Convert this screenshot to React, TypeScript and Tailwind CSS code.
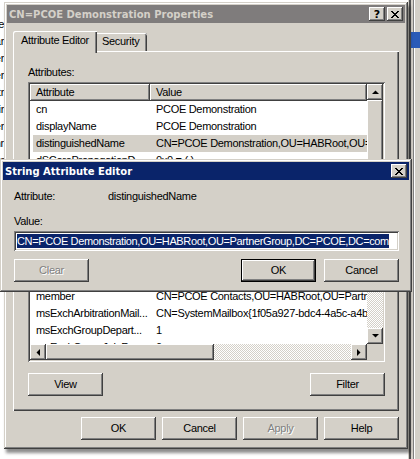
import type { ReactNode } from "react";

const RAISED =
  "shadow-[inset_-1px_-1px_#404040,inset_1px_1px_#ffffff,inset_-2px_-2px_#808080,inset_2px_2px_#d4d0c8]";
const SUNKEN =
  "shadow-[inset_1px_1px_#808080,inset_-1px_-1px_#ffffff,inset_2px_2px_#404040,inset_-2px_-2px_#d4d0c8]";
const DITHER =
  "[background-image:repeating-conic-gradient(#ffffff_0_25%,#d4d0c8_0_50%)] [background-size:2px_2px]";
const CAPTION = "[font-family:'DejaVu_Sans',sans-serif] text-[10px] font-bold tracking-normal";

// rows 5-11 sit under the string editor dialog, so they are left blank
const rows: [string, string][] = [
  ["cn", "PCOE Demonstration"],
  ["displayName", "PCOE Demonstration"],
  ["distinguishedName", "CN=PCOE Demonstration,OU=HABRoot,OU=PartnerGroup,DC=PCOE,DC=com"],
  ["dSCorePropagationD...", "0x0 = (  )"],
  ["", ""],
  ["", ""],
  ["", ""],
  ["", ""],
  ["", ""],
  ["", ""],
  ["", ""],
  ["member", "CN=PCOE Contacts,OU=HABRoot,OU=PartnerGroup,DC=PCOE,DC=com"],
  ["msExchArbitrationMail...", "CN=SystemMailbox{1f05a927-bdc4-4a5c-a4b2-9c3e1d7f0a11}"],
  ["msExchGroupDepart...", "1"],
  ["msExchGroupJoinRe...", "0"],
];

const behind = ["Name", "Bar", "Folder", "User", "Contr", "Admir", "Guer", "Ownr", "Usr"];

export default function App() {
  return (
    <div className="relative h-[459px] w-[420px] overflow-hidden bg-white text-[11px] leading-[13px] tracking-[-0.3px] text-black [font-family:'Liberation_Sans',Arial,sans-serif]">
      {/* windows behind */}
      <div className="absolute left-0 top-[16px] flex w-[4px] flex-col overflow-hidden">
        {behind.map((t, i) => (
          <div key={i} className="flex h-[17px] items-center justify-end whitespace-nowrap">
            {t}
          </div>
        ))}
      </div>
      <div className="absolute left-[408px] top-0 flex h-full w-[12px] bg-[#d4d0c8]">
        <div className="w-px bg-[#d4d0c8]" />
        <div className="w-[2px] bg-[#505050]" />
        <div className="w-[2px] bg-[#d4d0c8]" />
        <div className="w-px bg-[#808080]" />
        <div className="w-px bg-white" />
        <div className="relative flex-1">
          <div className="absolute left-[-4px] right-0 top-[32px] h-[16px] bg-[#2a5bb8]" />
        </div>
      </div>

      <PropertiesWindow />
      <StringEditor />
    </div>
  );
}

function PropertiesWindow() {
  return (
    <div className="absolute left-[4px] top-[2px] z-10 flex h-[447px] w-[404px] flex-col bg-[#d4d0c8] p-[3px] shadow-[inset_-1px_-1px_#404040,inset_1px_1px_#d4d0c8,inset_-2px_-2px_#808080,inset_2px_2px_#ffffff,2px_4px_3px_rgba(0,0,0,0.45)]">
      <div className="flex h-[18px] items-center bg-[#7f7c7c] px-[2px]">
        <span className={`${CAPTION} text-[#d4d0c8]`}>CN=PCOE Demonstration Properties</span>
        <div className="ml-auto flex gap-[2px]">
          <CaptionButton>
            <span className={`${CAPTION} text-[11px] leading-none`}>?</span>
          </CaptionButton>
          <CaptionButton>
            <CloseGlyph />
          </CaptionButton>
        </div>
      </div>

      <div className="flex flex-1 flex-col px-[6px] pt-[8px]">
        <div className="flex h-[20px] items-end">
          <div className="relative z-10 mb-[-2px] h-[22px] w-[84px] rounded-tl-[2px] bg-[#d4d0c8] pl-[8px] pt-[3px] shadow-[inset_1px_1px_#ffffff,inset_-1px_0_#404040,inset_-2px_0_#808080]">
            Attribute Editor
          </div>
          <div className="h-[18px] w-[50px] rounded-tr-[2px] bg-[#d4d0c8] pl-[5px] pt-[2px] shadow-[inset_0_1px_#ffffff,inset_-1px_0_#404040,inset_-2px_0_#808080]">
            Security
          </div>
        </div>

        <div className="h-[360px] bg-[#d4d0c8] pl-[15px] pt-[15px] shadow-[inset_1px_1px_#ffffff,inset_-1px_-1px_#404040,inset_-2px_-2px_#808080]">
          <div className="h-[13px]">Attributes:</div>
          <AttributeList />
          <div className="mt-[11px] flex w-[357px] justify-between">
            <Button label="View" />
            <Button label="Filter" />
          </div>
        </div>

        <div className="mt-[6px] flex justify-end gap-[6px]">
          <Button label="OK" />
          <Button label="Cancel" />
          <Button label="Apply" disabled />
          <Button label="Help" />
        </div>
      </div>
    </div>
  );
}

function AttributeList() {
  return (
    <div className={`mt-[3px] grid h-[280px] w-[357px] grid-cols-[337px_16px] grid-rows-[260px_16px] bg-white p-[2px] ${SUNKEN}`}>
      <div className="flex flex-col overflow-hidden">
        <div className="flex h-[17px] shrink-0">
          <div className={`flex w-[120px] items-center bg-[#d4d0c8] pl-[6px] ${RAISED}`}>Attribute</div>
          <div className={`flex flex-1 items-center bg-[#d4d0c8] pl-[6px] ${RAISED}`}>Value</div>
        </div>
        <div className="flex-1 overflow-hidden">
          {rows.map(([name, value], i) => (
            <div key={i} className="h-[17px] pl-[3px]">
              <div className={`flex h-full items-center ${name === "distinguishedName" ? "bg-[#d4d0c8]" : ""}`}>
                <div className="w-[117px] overflow-hidden whitespace-nowrap pl-[3px]">{name}</div>
                <div className="flex-1 overflow-hidden whitespace-nowrap pl-[6px]">{value}</div>
              </div>
            </div>
          ))}
        </div>
      </div>

      <div className="flex flex-col">
        <ScrollArrow dir="up" />
        <div className={`h-[120px] bg-[#d4d0c8] ${RAISED}`} />
        <div className={`flex-1 ${DITHER}`} />
        <ScrollArrow dir="down" />
      </div>

      <div className="flex">
        <ScrollArrow dir="left" />
        <div className={`w-[168px] bg-[#d4d0c8] ${RAISED}`} />
        <div className={`flex-1 ${DITHER}`} />
        <ScrollArrow dir="right" />
      </div>
      <div className="bg-[#d4d0c8]" />
    </div>
  );
}

function StringEditor() {
  return (
    <div className="absolute left-0 top-[159px] z-20 flex h-[133px] w-[412px] flex-col bg-[#d4d0c8] p-[3px] shadow-[inset_-1px_-1px_#404040,inset_1px_1px_#d4d0c8,inset_-2px_-2px_#808080,inset_2px_2px_#ffffff]">
      <div className="flex h-[18px] items-center bg-[#0a246a] pl-[2px] pr-[2px]">
        <span className={`${CAPTION} text-white`}>String Attribute Editor</span>
        <div className="ml-auto">
          <CaptionButton>
            <CloseGlyph />
          </CaptionButton>
        </div>
      </div>

      <div className="flex flex-col pl-[11px] pr-[10px]">
        <div className="mt-[10px] flex h-[13px]">
          <span className="w-[94px]">Attribute:</span>
          <span>distinguishedName</span>
        </div>
        <div className="mt-[12px] h-[13px]">Value:</div>
        <div className={`mt-[3px] flex h-[20px] items-center overflow-hidden bg-white pl-[3px] pr-[2px] ${SUNKEN}`}>
          <span className="h-[14px] whitespace-nowrap bg-[#0a246a] leading-[14px] tracking-[-0.37px] text-white">
            CN=PCOE Demonstration,OU=HABRoot,OU=PartnerGroup,DC=PCOE,DC=com
          </span>
        </div>
        <div className="mt-[8px] flex">
          <Button label="Clear" disabled />
          <div className="ml-auto">
            <Button label="OK" isDefault />
          </div>
          <div className="ml-[8px]">
            <Button label="Cancel" />
          </div>
        </div>
      </div>
    </div>
  );
}

function Button({ label, disabled, isDefault }: { label: string; disabled?: boolean; isDefault?: boolean }) {
  return (
    <div
      className={`flex h-[23px] w-[75px] items-center justify-center bg-[#d4d0c8] ${RAISED} ${isDefault ? "border border-black" : ""}`}
    >
      <span className={disabled ? "text-[#808080] [text-shadow:1px_1px_0_#ffffff]" : ""}>{label}</span>
    </div>
  );
}

function CaptionButton({ children }: { children: ReactNode }) {
  return (
    <div className={`flex h-[14px] w-[16px] items-center justify-center bg-[#d4d0c8] text-black ${RAISED}`}>
      {children}
    </div>
  );
}

function CloseGlyph() {
  return (
    <svg width="8" height="7" viewBox="0 0 8 7" shapeRendering="crispEdges">
      <path d="M0 0h2l2 2.5L6 0h2L5 3.5 8 7H6L4 4.5 2 7H0l3-3.5z" fill="#000" />
    </svg>
  );
}

function ScrollArrow({ dir }: { dir: "up" | "down" | "left" | "right" }) {
  const shapes = {
    up: { w: 7, h: 4, p: "0,4 3.5,0.5 7,4" },
    down: { w: 7, h: 4, p: "0,0 7,0 3.5,3.5" },
    left: { w: 4, h: 7, p: "4,0 4,7 0.5,3.5" },
    right: { w: 4, h: 7, p: "0,0 3.5,3.5 0,7" },
  }[dir];
  return (
    <div className={`flex h-[16px] w-[16px] shrink-0 items-center justify-center bg-[#d4d0c8] ${RAISED}`}>
      <svg width={shapes.w} height={shapes.h} viewBox={`0 0 ${shapes.w} ${shapes.h}`}>
        <polygon points={shapes.p} fill="#000" />
      </svg>
    </div>
  );
}
